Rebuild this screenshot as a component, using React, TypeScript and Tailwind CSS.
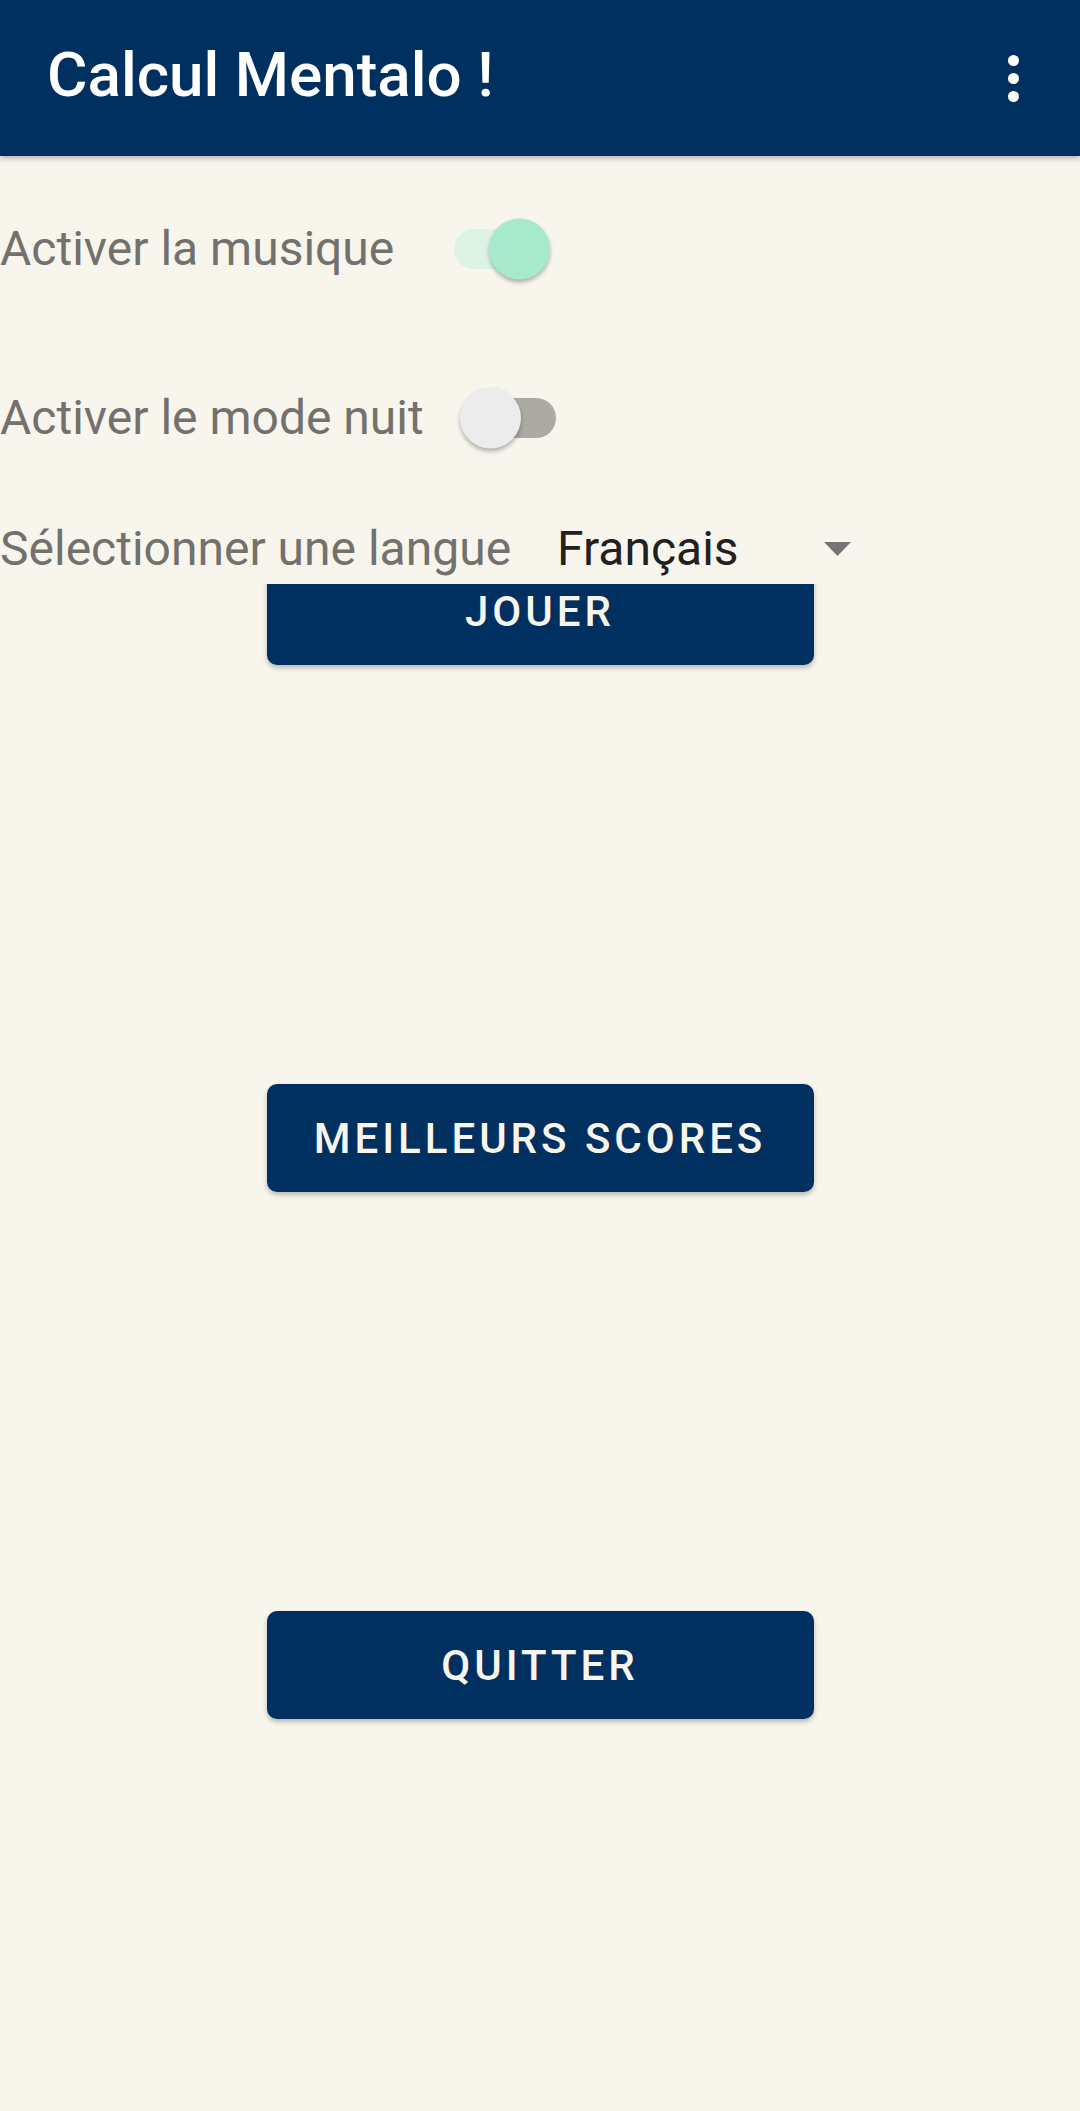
import { useState } from 'react';

type SwitchProps = {
  checked: boolean;
  onChange: () => void;
  className?: string;
};

function Switch({ checked, onChange, className = '' }: SwitchProps) {
  return (
    <button
      onClick={onChange}
      className={`relative w-[94px] h-[40px] rounded-full shrink-0 ${
        checked ? 'bg-[#ddf3e6]' : 'bg-[#abaaa5]'
      } ${className}`}
    >
      <span
        className={`absolute top-1/2 -translate-y-1/2 w-[61px] h-[61px] rounded-full shadow-[0_3px_4px_rgba(0,0,0,0.28)] ${
          checked ? 'right-[-2px] bg-[#a7e9cd]' : 'left-[-2px] bg-[#ececec]'
        }`}
      />
    </button>
  );
}

export default function App() {
  const [music, setMusic] = useState(true);
  const [night, setNight] = useState(false);

  const buttons = ['JOUER', 'MEILLEURS SCORES', 'QUITTER'];

  return (
    <div
      className="min-h-[2111px] bg-[#f8f5ed]"
      style={{ fontFamily: 'Roboto, "Noto Sans", sans-serif' }}
    >
      <header className="h-[156px] bg-[#00305f] flex items-center justify-between pl-[47px] pr-[61px] pb-[6px] shadow-[0_2px_6px_rgba(0,0,0,0.3)] relative z-20">
        <h1 className="text-[62px] font-medium text-white leading-none">
          Calcul Mentalo !
        </h1>
        <svg width="11" height="47" viewBox="0 0 11 47" className="mt-[6px]">
          <circle cx="5.5" cy="5.5" r="5.5" fill="white" />
          <circle cx="5.5" cy="23.5" r="5.5" fill="white" />
          <circle cx="5.5" cy="41.5" r="5.5" fill="white" />
        </svg>
      </header>

      <main className="flex flex-col pt-[62px]">
        <div className="h-[62px] flex items-center">
          <span className="text-[48px] text-[#72716d]">Activer la musique</span>
          <Switch
            checked={music}
            onChange={() => setMusic(!music)}
            className="ml-[60px]"
          />
        </div>

        <div className="h-[62px] flex items-center mt-[107px]">
          <span className="text-[48px] text-[#72716d]">Activer le mode nuit</span>
          <Switch
            checked={night}
            onChange={() => setNight(!night)}
            className="ml-[38px]"
          />
        </div>

        <div className="h-[70px] flex items-center mt-[65px] relative z-10 bg-[#f8f5ed]">
          <span className="text-[48px] text-[#72716d]">
            Sélectionner une langue
          </span>
          <div className="ml-[46px] w-[294px] flex items-center justify-between">
            <span className="text-[48px] text-[#222120]">Français</span>
            <svg width="27" height="14" viewBox="0 0 27 14">
              <polygon points="0,0 27,0 13.5,14" fill="#757575" />
            </svg>
          </div>
        </div>

        <div className="flex flex-col items-center -mt-[27px] gap-[419px]">
          {buttons.map((label) => (
            <button
              key={label}
              className="w-[547px] h-[108px] rounded-[10px] bg-[#00305f] text-[#f8f5ed] text-[42px] font-medium tracking-[4px] shadow-[0_3px_5px_rgba(0,0,0,0.25)]"
            >
              {label}
            </button>
          ))}
        </div>
      </main>
    </div>
  );
}
